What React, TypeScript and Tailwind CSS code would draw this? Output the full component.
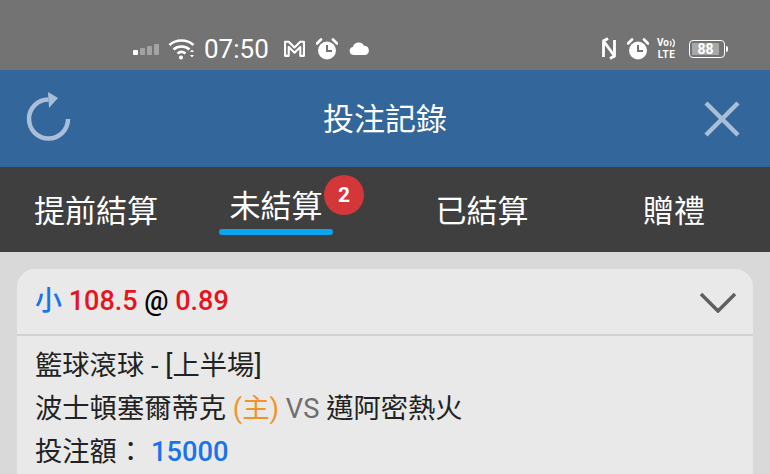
const latinCjk = "font-['Roboto','Noto_Sans_CJK_TC',sans-serif]";

function SignalIcon() {
  return (
    <svg width="26" height="12" viewBox="0 0 26 12" className="mr-[9px]">
      <rect x="0" y="7" width="5" height="5" rx="1" fill="#fff" />
      <rect x="7" y="5" width="5" height="7" rx="1" fill="#a3a3a3" />
      <rect x="14" y="3" width="5" height="9" rx="1" fill="#a3a3a3" />
      <rect x="21" y="1" width="5" height="11" rx="1" fill="#a3a3a3" />
    </svg>
  );
}

function WifiIcon() {
  return (
    <svg width="27" height="22" viewBox="0 0 27 22" fill="none" stroke="#fff" strokeWidth="2.6" className="mr-[9px]">
      <path d="M1.5 7 C8 1 19 1 25.5 7" />
      <path d="M5.5 11.5 C10 7.5 17 7.5 21.5 11.5" />
      <path d="M9.5 15.5 C12 13.5 15 13.5 17.5 15.5" />
      <circle cx="13" cy="19.5" r="2" fill="#fff" stroke="none" />
      <path d="M22 14l2-2.5 2 2.5zM22 17l2 2.5 2-2.5z" fill="#fff" stroke="none" />
    </svg>
  );
}

function MailIcon() {
  return (
    <svg width="21" height="17" viewBox="0 0 20 16" fill="none" stroke="#fff" strokeWidth="2" strokeLinejoin="round">
      <path d="M1 1.5h3.5L10 7l5.5-5.5H19V15h-3.5V6.5L10 12 4.5 6.5V15H1z" />
    </svg>
  );
}

function AlarmIcon() {
  return (
    <svg width="22" height="22" viewBox="0 0 22 22">
      <circle cx="11" cy="12.5" r="9" fill="#fff" />
      <path d="M1 5.5 L5 1.5 M17 1.5 L21 5.5" stroke="#fff" strokeWidth="2.6" strokeLinecap="round" />
      <path d="M11 7v6h5" fill="none" stroke="#737373" strokeWidth="2" />
    </svg>
  );
}

function CloudIcon() {
  return (
    <svg width="21" height="13" viewBox="0 0 21 13">
      <path d="M4.5 13a4 4 0 0 1-.7-7.900 6 6 0 0 1 11.200-1.300A4.700 4.700 0 0 1 16.500 13z" fill="#fff" />
    </svg>
  );
}

function NfcIcon() {
  return (
    <svg width="14" height="23" viewBox="0 0 14 23" fill="none" stroke="#fff" strokeWidth="2.8" strokeLinejoin="round">
      <path d="M1.5 20V4L12.500 19V3" />
      <path d="M1.500 4 L6 1.500 M12.500 19 L8 21.500" />
    </svg>
  );
}

function VolteIcon() {
  return (
    <div className="flex flex-col items-center font-['Roboto',sans-serif] text-[10px] leading-[12px] font-bold text-white">
      <div className="flex h-[12px] items-center">
        <span>Vo</span>
        <svg width="7" height="10" viewBox="0 0 6 10" fill="none" stroke="#fff" strokeWidth="1.3">
          <path d="M0.500 3 C2 4 2 6 0.500 8" />
          <path d="M3 1 C5.500 3 5.500 7 3 9" />
        </svg>
      </div>
      <div className="h-[12px] tracking-[0.5px]">LTE</div>
    </div>
  );
}

function BatteryIcon() {
  return (
    <div className="flex items-center">
      <div className="flex h-[18px] w-[36px] items-center rounded-[4px] border-[1.5px] border-white p-[2px]">
        <div className="flex h-full w-[27px] items-center justify-center rounded-[1px] bg-[#a8a8a8] font-['Roboto',sans-serif] text-[14px] leading-none font-bold text-white">
          88
        </div>
      </div>
      <div className="ml-[1px] h-[6px] w-[2px] rounded-r-sm bg-white" />
    </div>
  );
}

function StatusBar() {
  return (
    <div className="flex h-[70px] items-center bg-[#737373] pt-[27px] pr-[42px] pl-[133px]">
      <SignalIcon />
      <WifiIcon />
      <span className="mr-[15px] font-['Roboto',sans-serif] text-[26px] leading-none text-white">07:50</span>
      <div className="mr-[11px]"><MailIcon /></div>
      <div className="mr-[11px]"><AlarmIcon /></div>
      <CloudIcon />
      <div className="ml-auto flex items-center">
        <div className="mr-[11px]"><NfcIcon /></div>
        <div className="mr-[8px]"><AlarmIcon /></div>
        <div className="mr-[13px]"><VolteIcon /></div>
        <BatteryIcon />
      </div>
    </div>
  );
}

function RefreshIcon() {
  return (
    <svg width="46" height="50" viewBox="0 0 46 50" fill="none" className="mb-[3px] ml-[26px]">
      <path d="M42 27A19.500 19.500 0 1 1 22.500 7.500" stroke="#a9bfd8" strokeWidth="4.5" />
      <path d="M22 0 L32 6 L23 16z" fill="#a9bfd8" />
    </svg>
  );
}

function CloseIcon() {
  return (
    <svg width="38" height="38" viewBox="0 0 38 38" stroke="#a9bfd8" strokeWidth="4.5" className="mr-[29px] justify-self-end">
      <path d="M3 3 L35 35 M35 3 L3 35" />
    </svg>
  );
}

function Header() {
  return (
    <div className="grid h-[97px] grid-cols-[1fr_auto_1fr] items-center bg-[#33669a]">
      <RefreshIcon />
      <span className="mb-[4px] font-['Noto_Sans_CJK_TC',sans-serif] text-[31px] leading-none text-white">投注記錄</span>
      <CloseIcon />
    </div>
  );
}

function Tabs() {
  const tabClass =
    "flex h-full items-center justify-center font-['Noto_Sans_CJK_TC',sans-serif] text-[31px] leading-none text-white";
  return (
    <div className="flex h-[85px] bg-[#3f3f3f]">
      <div className={`${tabClass} w-[192px] pb-[2px]`}>提前結算</div>
      <div className={`${tabClass} relative w-[168px] pb-[13px]`}>
        未結算
        <span className="absolute top-[8px] left-[132px] flex h-[40px] w-[40px] items-center justify-center rounded-full bg-[#d4373a] font-['Roboto',sans-serif] text-[21px] font-bold text-white">
          2
        </span>
        <span className="absolute top-[62px] left-[27px] h-[6px] w-[114px] rounded-full bg-[#0aa6f2]" />
      </div>
      <div className={`${tabClass} w-[244px] pb-[2px]`}>已結算</div>
      <div className={`${tabClass} w-[140px] pb-[2px]`}>贈禮</div>
    </div>
  );
}

function ChevronIcon() {
  return (
    <svg width="38" height="22" viewBox="0 0 38 22" fill="none" stroke="#5f5f5f" strokeWidth="3.5">
      <path d="M2 3 L19 20 L36 3" />
    </svg>
  );
}

function BetCard() {
  return (
    <div className={`rounded-t-[18px] bg-[#e9e9e9] ${latinCjk}`}>
      <div className="flex h-[65px] items-center justify-between pr-[16px] pl-[18px] text-[27px] font-medium">
        <div>
          <span className="text-[#1a73e8]">小</span>
          <span className="text-[#e8141c]"> 108.5 </span>
          <span className="text-black">@</span>
          <span className="text-[#e8141c]"> 0.89</span>
        </div>
        <ChevronIcon />
      </div>
      <div className="border-t-[2px] border-[#d2d2d2] px-[18px] pt-[9px] text-[27.3px] leading-[43px] text-[#222]">
        <div>籃球滾球 - [上半場]</div>
        <div>
          波士頓塞爾蒂克 <span className="text-[#f0932b]">(主)</span>{" "}
          <span className="text-[#6f6f6f]">VS</span> 邁阿密熱火
        </div>
        <div>
          投注額： <span className="font-medium text-[#1a73e8]">15000</span>
        </div>
      </div>
    </div>
  );
}

export default function App() {
  return (
    <div className="h-[474px] w-[770px] overflow-hidden bg-[#d9d9d9]">
      <StatusBar />
      <Header />
      <Tabs />
      <div className="px-[17px] pt-[17px]">
        <BetCard />
      </div>
    </div>
  );
}
